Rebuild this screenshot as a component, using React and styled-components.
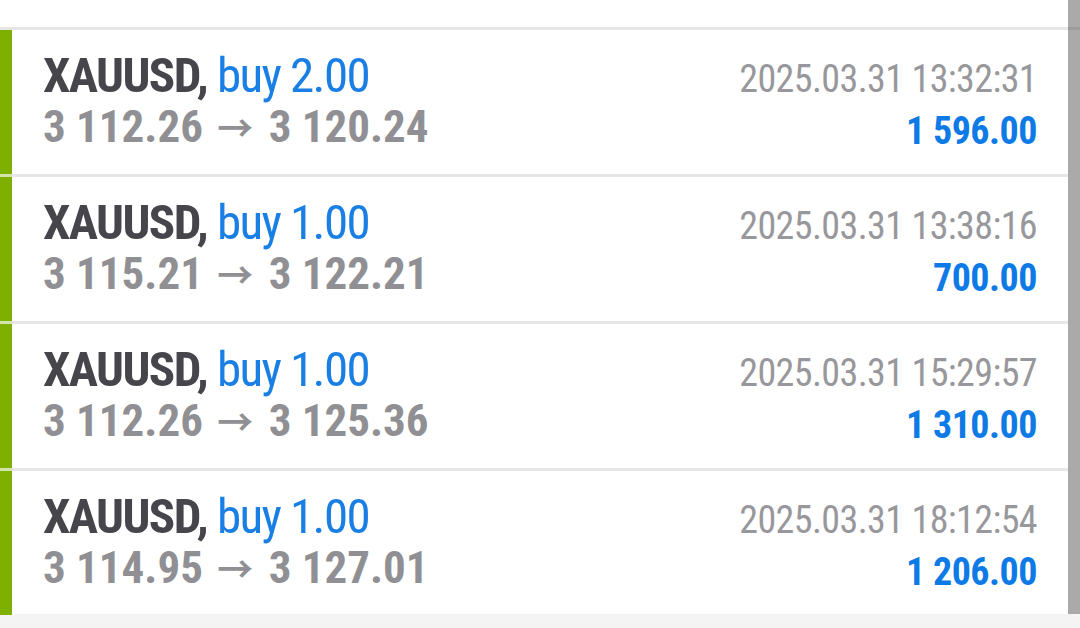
import React from "react";
import styled, { createGlobalStyle } from "styled-components";

const GlobalStyle = createGlobalStyle`
  html, body {
    margin: 0;
    padding: 0;
    background: #f4f4f4;
  }
  body {
    font-family: Roboto, "Liberation Sans", sans-serif;
    font-stretch: 75%;
  }
`;

const trades = [
  { symbol: "XAUUSD", volume: "2.00", open: "3 112.26", close: "3 120.24", time: "2025.03.31 13:32:31", profit: "1 596.00" },
  { symbol: "XAUUSD", volume: "1.00", open: "3 115.21", close: "3 122.21", time: "2025.03.31 13:38:16", profit: "700.00" },
  { symbol: "XAUUSD", volume: "1.00", open: "3 112.26", close: "3 125.36", time: "2025.03.31 15:29:57", profit: "1 310.00" },
  { symbol: "XAUUSD", volume: "1.00", open: "3 114.95", close: "3 127.01", time: "2025.03.31 18:12:54", profit: "1 206.00" },
];

const Screen = styled.div`
  width: 1080px;
  height: 628px;
  overflow: hidden;
  display: flex;
  flex-direction: column;
  background: #f4f4f4;
`;

const Body = styled.div`
  display: flex;
  height: 614px;
`;

const List = styled.div`
  flex: 1;
  background: #ffffff;
  padding-top: 27px;
`;

const Scrollbar = styled.div`
  width: 12px;
  background: #aaaaaa;
  display: flex;
  flex-direction: column;
  &::before {
    content: "";
    margin-top: 27px;
    height: 3px;
    background: #9c9c9c;
  }
`;

const Row = styled.div`
  display: flex;
  height: 147px;
`;

const Bar = styled.div`
  width: 12px;
  background: #7fb000;
  border-top: 3px solid ${(p) => (p.$first ? "#e6e6e6" : "#d3e4ab")};
`;

const Content = styled.div`
  flex: 1;
  display: flex;
  justify-content: space-between;
  border-top: 3px solid #e6e6e6;
  padding: 0 31px 0 31px;
`;

const Left = styled.div`
  display: flex;
  flex-direction: column;
  padding-top: 20px;
`;

const Right = styled.div`
  display: flex;
  flex-direction: column;
  align-items: flex-end;
  padding-top: 23px;
`;

const Title = styled.div`
  font-size: 49px;
  line-height: 51px;
  letter-spacing: -1.6px;
  white-space: nowrap;
`;

const Symbol = styled.span`
  font-weight: 700;
  color: #45454b;
`;

const Volume = styled.span`
  font-weight: 400;
  color: #1a7fe4;
`;

const Prices = styled.div`
  font-size: 45px;
  line-height: 50px;
  font-weight: 700;
  color: #909094;
  white-space: nowrap;
`;

const Arrow = styled.span`
  font-family: "Noto Sans CJK JP", sans-serif;
  font-size: 36px;
  font-weight: 700;
  margin: 0 5px 0 4px;
`;

const Time = styled.div`
  font-size: 38px;
  line-height: 52px;
  color: #98989c;
  letter-spacing: -0.6px;
  white-space: nowrap;
`;

const Profit = styled.div`
  font-size: 38px;
  line-height: 52px;
  font-weight: 700;
  color: #0d7ae6;
  letter-spacing: -0.5px;
  white-space: nowrap;
`;

function TradeRow({ trade, first }) {
  return (
    <Row>
      <Bar $first={first} />
      <Content>
        <Left>
          <Title>
            <Symbol>{trade.symbol},</Symbol> <Volume>buy {trade.volume}</Volume>
          </Title>
          <Prices>
            {trade.open} <Arrow>→</Arrow> {trade.close}
          </Prices>
        </Left>
        <Right>
          <Time>{trade.time}</Time>
          <Profit>{trade.profit}</Profit>
        </Right>
      </Content>
    </Row>
  );
}

export default function App() {
  return (
    <Screen>
      <GlobalStyle />
      <Body>
        <List>
          {trades.map((t, i) => (
            <TradeRow key={i} trade={t} first={i === 0} />
          ))}
        </List>
        <Scrollbar />
      </Body>
    </Screen>
  );
}
